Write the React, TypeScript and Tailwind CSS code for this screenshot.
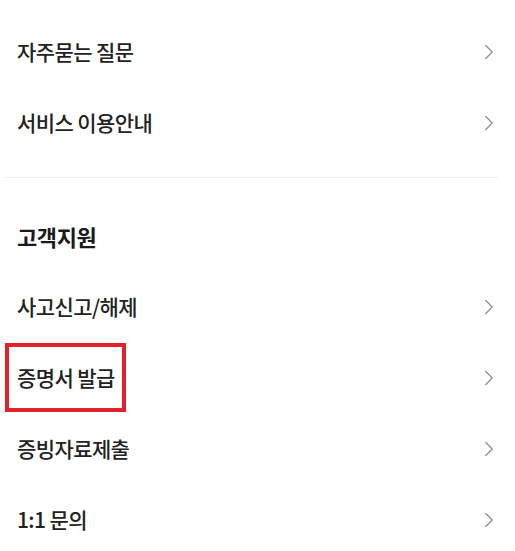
import { ChevronRight } from "lucide-react";

const font = { fontFamily: '"Noto Sans CJK KR", "Noto Sans", sans-serif' };

function Row({ label, highlight }: { label: string; highlight?: boolean }) {
  return (
    <div className="relative flex items-center justify-between h-[71px] pl-[17px] pr-[13px]">
      <span className="text-[21px] font-medium tracking-[-0.6px] text-[#222]">{label}</span>
      <ChevronRight size={26} strokeWidth={1.1} className="text-[#8d8d8d]" />
      {highlight && (
        <div className="absolute left-[5px] top-[1px] w-[121px] h-[69px] border-4 border-[#e3202b]" />
      )}
    </div>
  );
}

export default function App() {
  return (
    <div className="w-[515px] h-[551px] overflow-hidden bg-white" style={font}>
      <div className="pt-[16px]">
        <Row label="자주묻는 질문" />
        <Row label="서비스 이용안내" />
      </div>
      <div className="mt-[19px] mx-[5px] mr-[17px] h-px bg-[#eeeeee]" />
      <div className="h-[93px] flex items-center pl-[17px] pt-[24px]">
        <h3 className="text-[22px] font-bold tracking-[-0.4px] text-[#1a1a1a]">고객지원</h3>
      </div>
      <div>
        <Row label="사고신고/해제" />
        <Row label="증명서 발급" highlight />
        <Row label="증빙자료제출" />
        <Row label="1:1 문의" />
      </div>
    </div>
  );
}
